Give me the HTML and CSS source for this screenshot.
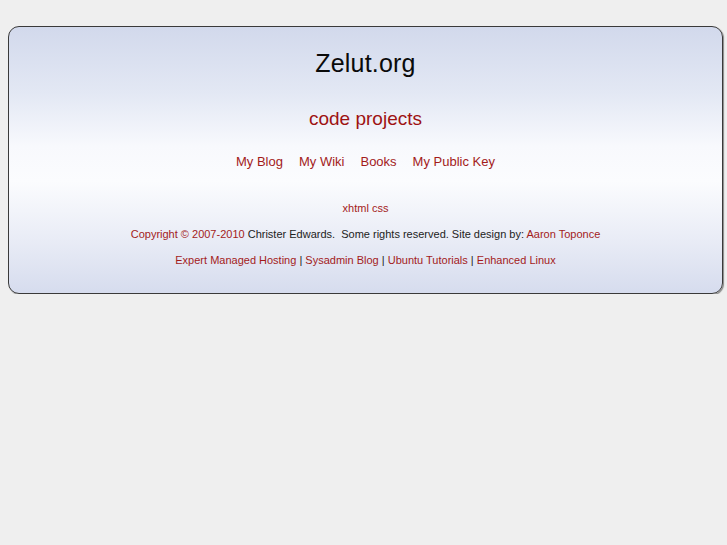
FILE: index.html
```html
<!DOCTYPE html>
<html>
<head>
<meta charset="utf-8">
<title>Zelut.org</title>
<link rel="stylesheet" href="styles.css">
</head>
<body>
<div class="box">
  <h1 class="title">Zelut.org</h1>
  <h2 class="subtitle"><a href="#">code projects</a></h2>
  <ul class="nav">
    <li><a href="#">My Blog</a></li>
    <li><a href="#">My Wiki</a></li>
    <li><a href="#">Books</a></li>
    <li><a href="#">My Public Key</a></li>
  </ul>
  <p class="small valid"><a href="#">xhtml</a> <a href="#">css</a></p>
  <p class="small copy"><a href="#">Copyright &copy; 2007-2010</a> Christer Edwards.&nbsp; Some rights reserved. Site design by: <a href="#">Aaron Toponce</a></p>
  <p class="small links"><a href="#">Expert Managed Hosting</a> | <a href="#">Sysadmin Blog</a> | <a href="#">Ubuntu Tutorials</a> | <a href="#">Enhanced Linux</a></p>
</div>
</body>
</html>
```
FILE: styles.css
```css
html, body {
  margin: 0;
  padding: 0;
  background: #efefef;
}
body {
  font-family: "Liberation Sans", Arial, sans-serif;
  color: #222;
  padding: 26px 4px 0 8px;
}
a {
  color: #a31b1b;
  text-decoration: none;
}
.box {
  border: 1px solid #3a3a3a;
  border-radius: 11px;
  box-shadow: 1px 1px 1px #888;
  background: linear-gradient(to bottom, #d2d9ec 0%, #e3e8f4 25%, #f8f9fd 45%, #fbfcfe 58%, #e9ecf6 80%, #d6dcee 100%);
  padding: 21px 0 26px;
  text-align: center;
}
.title {
  margin: 0;
  font-size: 25px;
  line-height: 30px;
  font-weight: normal;
  color: #0a0a0a;
  letter-spacing: 0.2px;
}
.subtitle {
  margin: 29px 0 0;
  font-size: 19px;
  line-height: 24px;
  font-weight: normal;
}
.subtitle a {
  color: #9e1212;
}
.nav {
  list-style: none;
  margin: 23px 0 0;
  padding: 0;
  display: flex;
  justify-content: center;
  gap: 16px;
  font-size: 13px;
  line-height: 16px;
}
.small {
  margin: 12px 0 0;
  font-size: 11px;
  line-height: 14px;
  color: #222;
}
.valid {
  margin-top: 31px;
}
```
